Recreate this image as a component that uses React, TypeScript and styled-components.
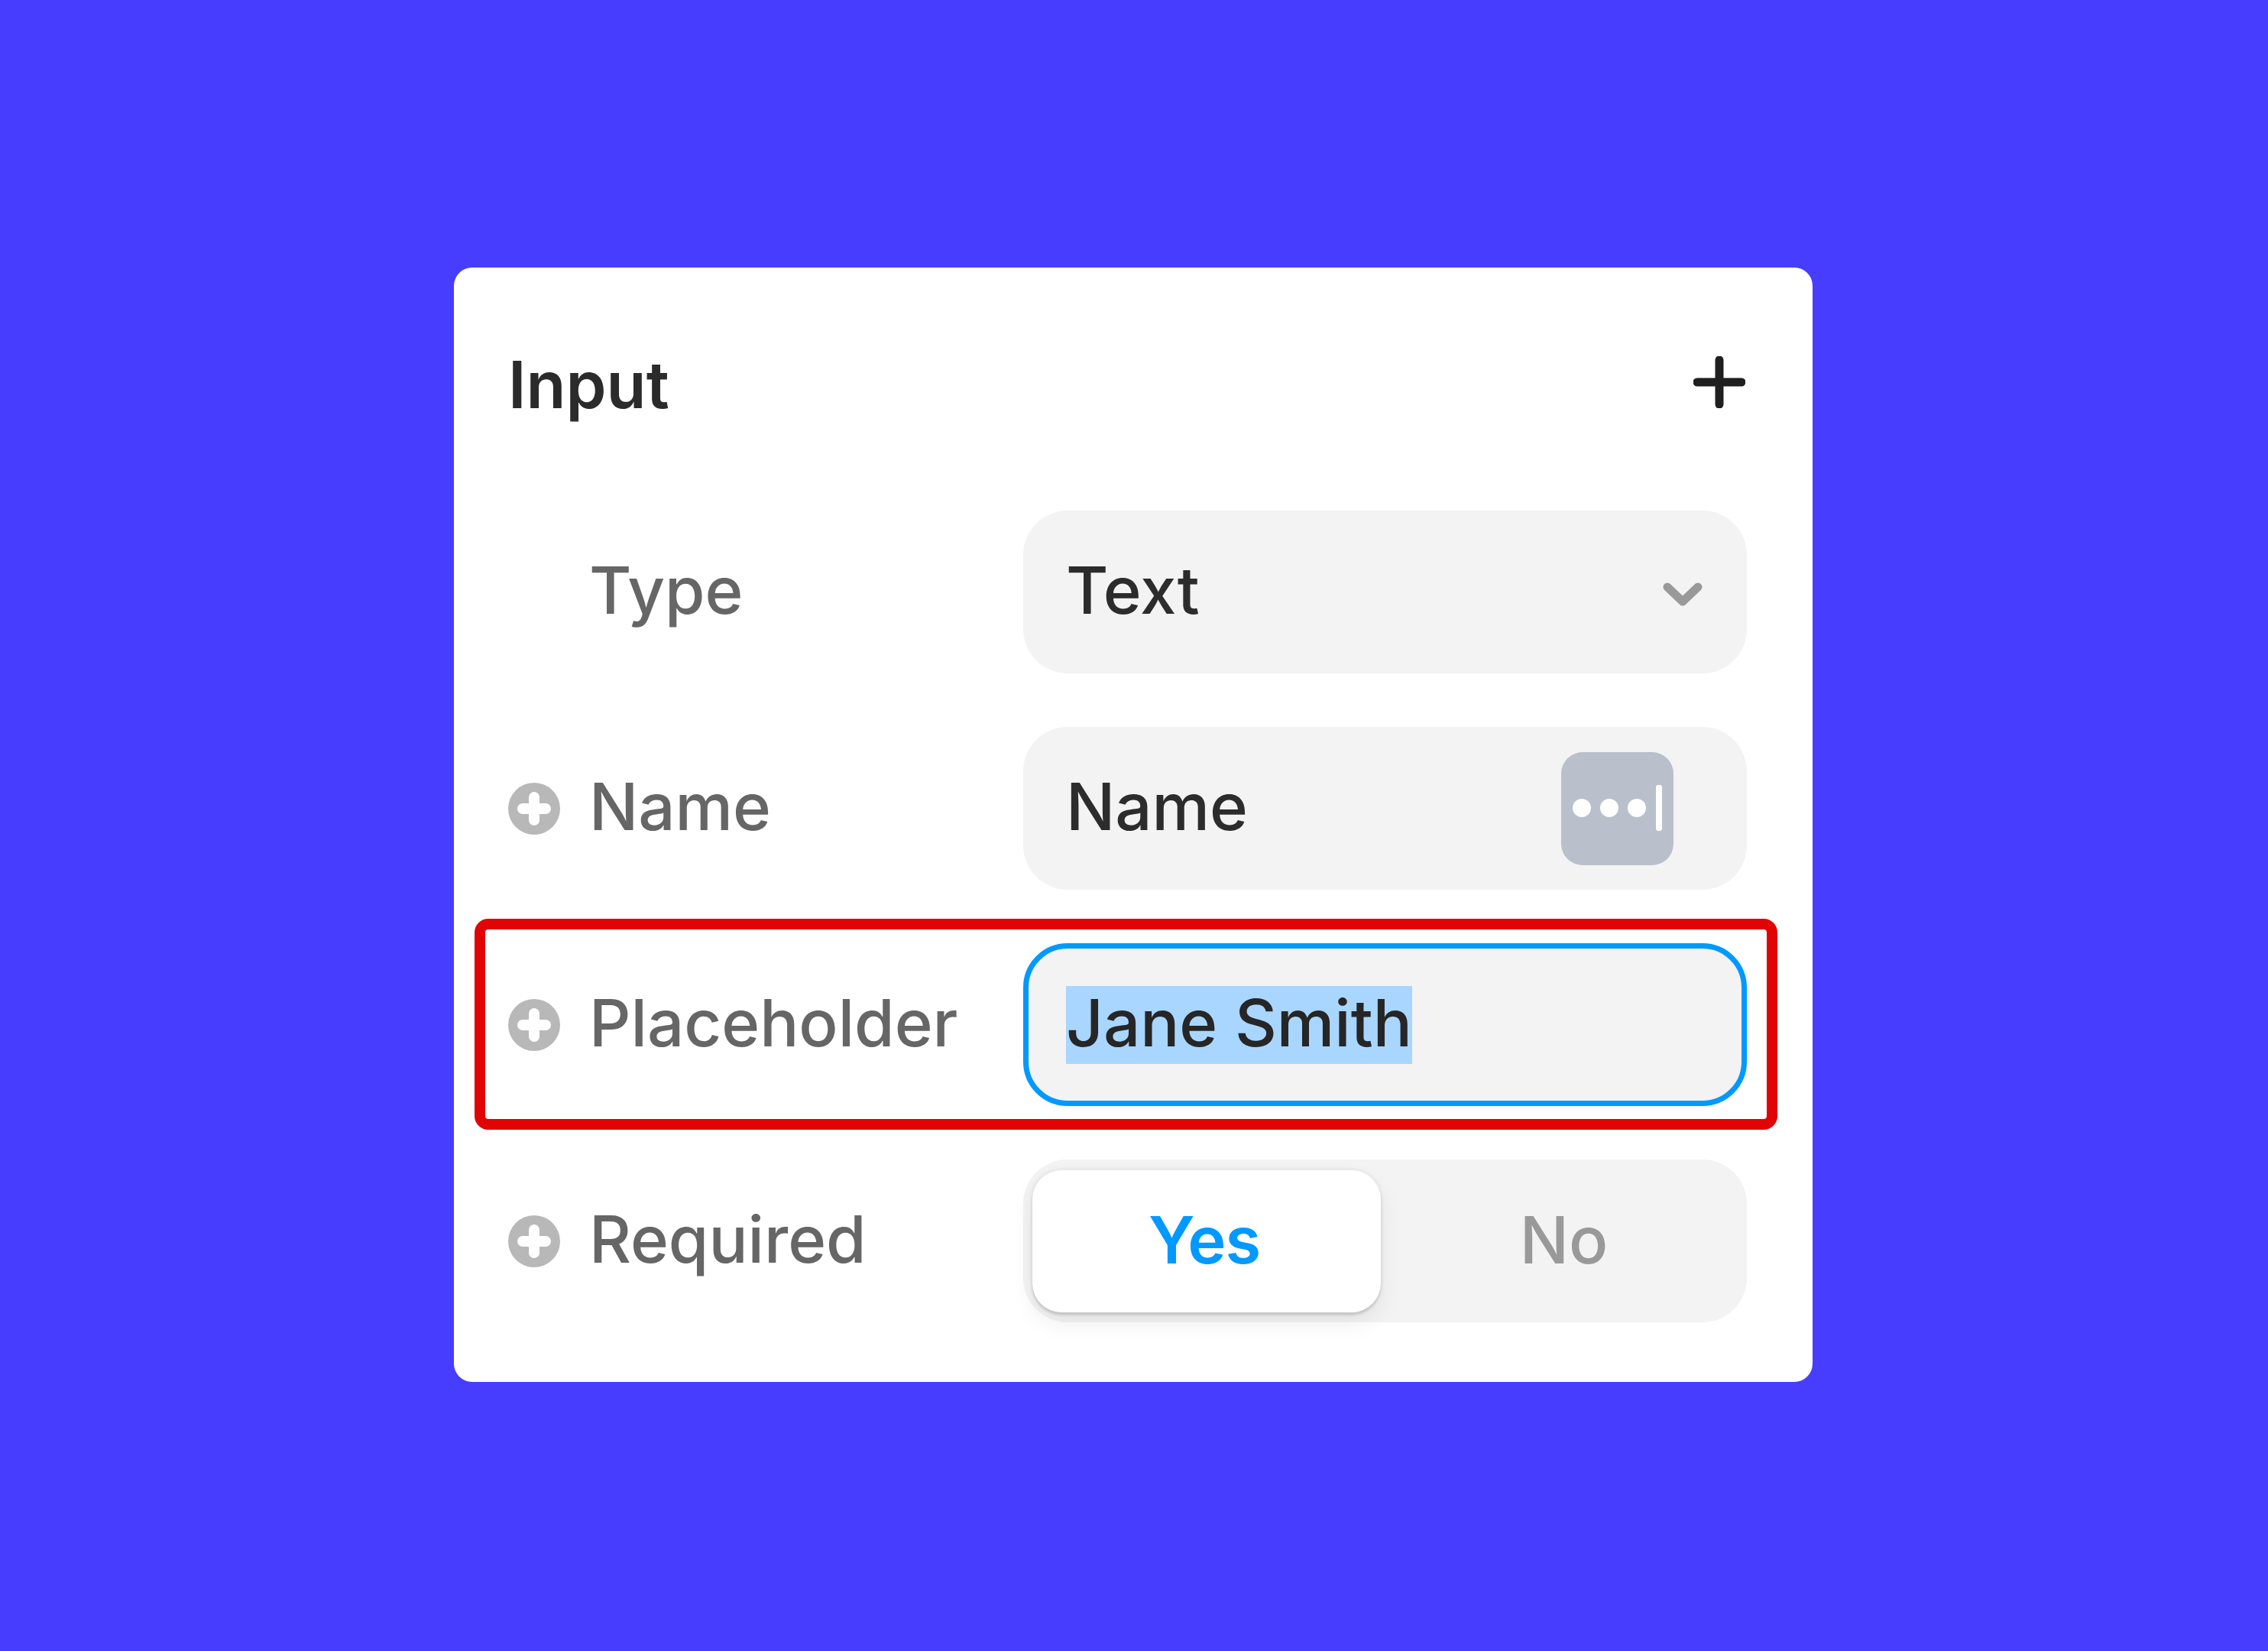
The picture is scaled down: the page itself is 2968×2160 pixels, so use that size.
import styled, { createGlobalStyle } from "styled-components"

const GlobalStyle = createGlobalStyle`
  html, body {
    margin: 0;
    padding: 0;
    background: #473dff;
  }
`

const Page = styled.div`
  width: 2968px;
  height: 2160px;
  box-sizing: border-box;
  padding: 350px 0 0 594px;
  background: #473dff;
  font-family: Inter, "Liberation Sans", sans-serif;
  font-size: 85px;
  font-weight: 500;
  overflow: hidden;
`

const Card = styled.div`
  width: 1778px;
  height: 1458px;
  box-sizing: border-box;
  padding: 0 86px 0 71px;
  background: white;
  border-radius: 24px;
`

const Header = styled.div`
  height: 318px;
  padding-bottom: 18px;
  box-sizing: border-box;
  display: flex;
  align-items: center;
  justify-content: space-between;
`

const Title = styled.div`
  margin-top: 6px;
  font-weight: 600;
  color: #2b2b2b;
`

const AddIcon = styled.svg`
  width: 68px;
  height: 68px;
  margin-right: 2px;
  color: #1f1f1f;
`

const Rows = styled.div`
  display: flex;
  flex-direction: column;
  gap: 70px;
`

const Row = styled.div`
  position: relative;
  display: flex;
  align-items: center;
  height: 213px;
`

const Highlight = styled.div`
  position: absolute;
  top: -32px;
  bottom: -31px;
  left: -44px;
  right: -40px;
  border: 14px solid #e00404;
  border-radius: 18px;
  pointer-events: none;
`

const LabelWrap = styled.div`
  width: 674px;
  display: flex;
  align-items: center;
  gap: 38px;
  flex-shrink: 0;
`

const AttrIcon = styled.svg`
  width: 68px;
  height: 68px;
  flex-shrink: 0;
`

const IconSlot = styled.div`
  width: 68px;
  height: 68px;
  flex-shrink: 0;
`

const Label = styled.span`
  margin-top: -4px;
  color: #666;
`

const Field = styled.div<{ $focused?: boolean }>`
  flex: 1;
  height: 100%;
  box-sizing: border-box;
  display: flex;
  align-items: center;
  justify-content: space-between;
  padding: 0 58px 0 56px;
  background: #f3f3f3;
  border-radius: 58px;
  color: #2c2c2c;
  ${p => p.$focused && `
    border: 7px solid #0099ff;
    padding: 0 51px 0 49px;
  `}
`

const Value = styled.span`
  margin-top: -4px;
`

const Selected = styled.span`
  display: inline-block;
  line-height: 98px;
  padding-bottom: 4px;
  background: #a9d6ff;
  color: #262626;
`

const Chevron = styled.svg`
  width: 52px;
  height: 32px;
  margin-top: 4px;
  color: #999;
`

const TokenIcon = styled.svg`
  width: 147px;
  height: 148px;
  margin-right: 38px;
`

const Toggle = styled.div`
  flex: 1;
  height: 100%;
  box-sizing: border-box;
  display: flex;
  padding: 14px 0 13px 12px;
  background: #f3f3f3;
  border-radius: 58px;
`

const Segment = styled.div<{ $active?: boolean }>`
  flex: ${p => (p.$active ? "0 0 456px" : "1")};
  display: flex;
  align-items: center;
  justify-content: center;
  padding-bottom: 4px;
  padding-right: ${p => (p.$active ? "6px" : "0")};
  box-sizing: border-box;
  border-radius: 38px;
  background: ${p => (p.$active ? "white" : "transparent")};
  color: ${p => (p.$active ? "#0099ff" : "#999")};
  font-weight: ${p => (p.$active ? 600 : 500)};
  letter-spacing: ${p => (p.$active ? "-1px" : "0")};
  box-shadow: ${p =>
    p.$active
      ? "0 4px 3px rgba(0,0,0,0.1), 0 0 4px 2px rgba(0,0,0,0.05), 0 14px 30px rgba(0,0,0,0.07)"
      : "none"};
`

function PlusCircle() {
  return (
    <AttrIcon viewBox="0 0 68 68">
      <circle cx="34" cy="34" r="34" fill="#b8b8b8" />
      <path d="M34 19v30M19 34h30" stroke="white" strokeWidth="14" strokeLinecap="round" />
    </AttrIcon>
  )
}

export default function App() {
  return (
    <Page>
      <GlobalStyle />
      <Card>
        <Header>
          <Title>Input</Title>
          <AddIcon viewBox="0 0 68 68">
            <path d="M34 5v58M5 34h58" stroke="currentColor" strokeWidth="11" strokeLinecap="round" />
          </AddIcon>
        </Header>
        <Rows>
          <Row>
            <LabelWrap>
              <IconSlot />
              <Label>Type</Label>
            </LabelWrap>
            <Field>
              <Value>Text</Value>
              <Chevron viewBox="0 0 52 32">
                <path d="M6 7l20 19L46 7" fill="none" stroke="currentColor" strokeWidth="11" strokeLinecap="round" strokeLinejoin="round" />
              </Chevron>
            </Field>
          </Row>
          <Row>
            <LabelWrap>
              <PlusCircle />
              <Label>Name</Label>
            </LabelWrap>
            <Field>
              <Value>Name</Value>
              <TokenIcon viewBox="0 0 147 148">
                <rect width="147" height="148" rx="28" fill="#b9c0cc" />
                <circle cx="27" cy="73" r="12" fill="white" />
                <circle cx="63" cy="73" r="12" fill="white" />
                <circle cx="99" cy="73" r="12" fill="white" />
                <rect x="124" y="43" width="8" height="60" rx="3" fill="white" />
              </TokenIcon>
            </Field>
          </Row>
          <Row>
            <Highlight />
            <LabelWrap>
              <PlusCircle />
              <Label>Placeholder</Label>
            </LabelWrap>
            <Field $focused>
              <Selected>Jane Smith</Selected>
            </Field>
          </Row>
          <Row>
            <LabelWrap>
              <PlusCircle />
              <Label>Required</Label>
            </LabelWrap>
            <Toggle>
              <Segment $active>Yes</Segment>
              <Segment>No</Segment>
            </Toggle>
          </Row>
        </Rows>
      </Card>
    </Page>
  )
}
